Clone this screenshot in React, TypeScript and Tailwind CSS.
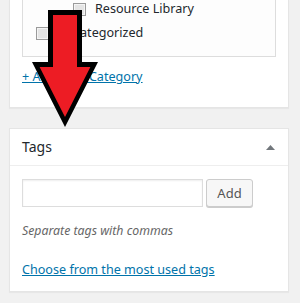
function Checkbox() {
  return (
    <span className="block h-[13px] w-[13px] shrink-0 border border-[#9a9a9a] bg-[#e4e4e4] shadow-[inset_0_0_0_1px_#f4f4f4]" />
  )
}

function Arrow() {
  return (
    <svg
      className="pointer-events-none absolute left-0 top-0"
      width="120"
      height="135"
      viewBox="0 0 120 135"
    >
      <polygon points="48,10 82,10 82,62 98,62 65,127 32,62 48,62" fill="#000" />
      <polygon
        points="53,15 77,15 77,67 90.4,67 65,117 39.6,67 53,67"
        fill="#ed1c24"
      />
    </svg>
  )
}

export default function App() {
  return (
    <div className="relative h-[303px] w-[300px] overflow-hidden bg-[#f1f1f1] font-['Noto_Sans',sans-serif] text-[12.6px] text-[#23282d]">
      {/* categories box, cut off at the top */}
      <div className="ml-[9px] h-[108px] w-[280px] border border-t-0 border-[#e5e5e5] bg-white px-3 shadow-[0_1px_1px_rgba(0,0,0,0.04)]">
        <div className="h-[57px] border border-t-0 border-[#dddddd] bg-[#fdfdfd]">
          <div className="flex h-[18px] items-center pl-[50px]">
            <Checkbox />
            <span className="ml-[9px] leading-[18px]">Resource Library</span>
          </div>
          <div className="mt-[6px] flex h-[18px] items-center pl-[13px]">
            <Checkbox />
            <span className="ml-[8px] leading-[18px]">Uncategorized</span>
          </div>
        </div>
        <a className="mt-[11px] block leading-[18px] text-[#0073aa] underline">
          + Add New Category
        </a>
      </div>

      {/* tags box */}
      <div className="ml-[9px] mt-[20px] h-[164px] w-[280px] border border-[#e5e5e5] bg-white shadow-[0_1px_1px_rgba(0,0,0,0.04)]">
        <div className="flex h-[37px] items-center justify-between border-b border-[#eeeeee] px-3">
          <span className="text-[14px] leading-[18px]">Tags</span>
          <svg width="9" height="5" viewBox="0 0 9 5" className="mr-[1px]">
            <polygon points="0,5 4.5,0 9,5" fill="#72777c" />
          </svg>
        </div>
        <div className="px-3 pt-[13px]">
          <div className="flex items-start">
            <div className="h-[28px] w-[181px] border border-[#dddddd] bg-white shadow-[inset_0_1px_2px_rgba(0,0,0,0.07)]" />
            <button
              type="button"
              className="ml-[3px] h-[28px] w-[47px] rounded-[3px] border border-[#cccccc] bg-[#f7f7f7] text-[13px] leading-[26px] text-[#555555] shadow-[0_1px_0_#cccccc]"
            >
              Add
            </button>
          </div>
          <p className="mt-[15px] text-[12.3px] italic leading-[18px] text-[#666666]">
            Separate tags with commas
          </p>
          <a className="mt-[21px] block leading-[18px] text-[#0073aa] underline">
            Choose from the most used tags
          </a>
        </div>
      </div>

      <Arrow />
    </div>
  )
}
